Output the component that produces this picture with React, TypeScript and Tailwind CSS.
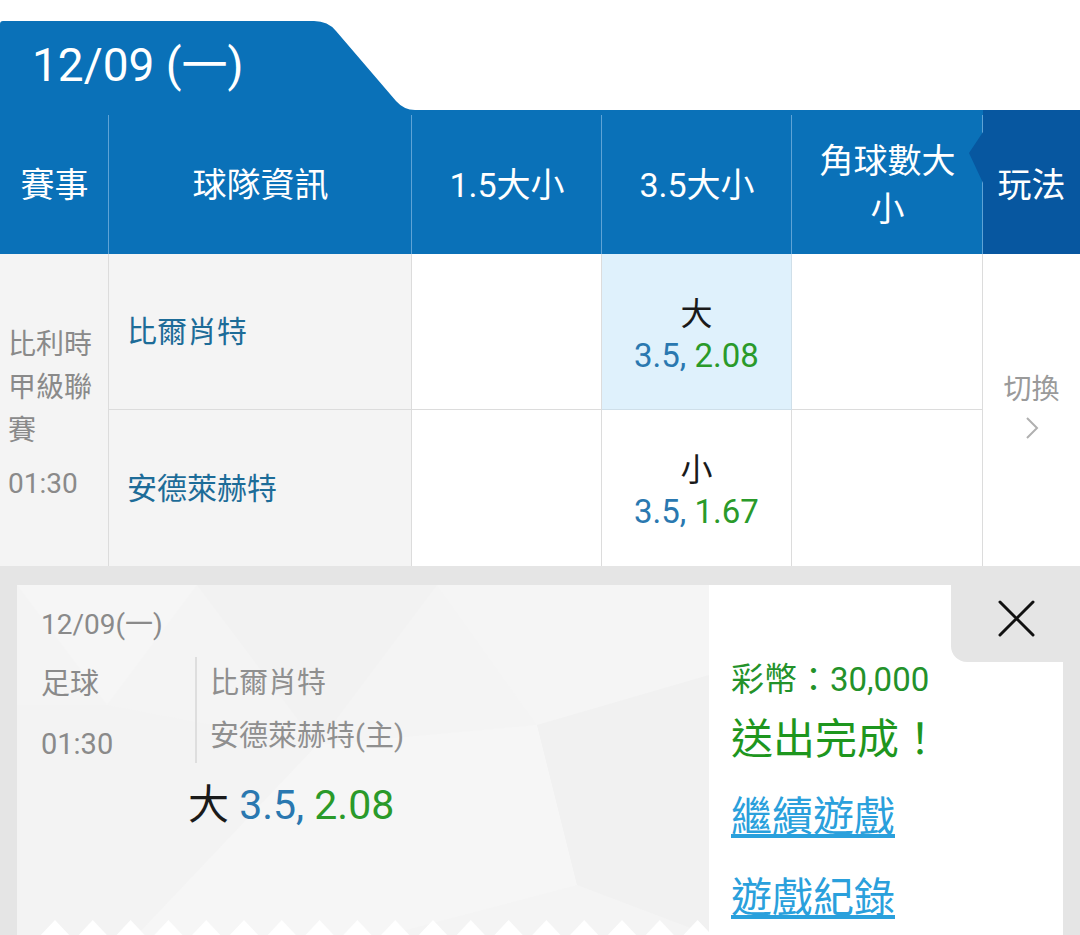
export default function App() {
  const teeth = Array.from({ length: 19 }, (_, i) => 38 + i * 37.8)

  return (
    <div className="h-[935px] w-[1080px] overflow-hidden bg-white font-['Roboto','Noto_Sans_CJK_TC',sans-serif]">
      {/* Date tab */}
      <div className="flex pt-[21px]">
        <div className="h-[89px] w-[300px] rounded-tl-[3px] bg-[#0a71b8] pl-[32px] pt-[16px] text-[46px] leading-[56px] text-white">
          12/09 (一)
        </div>
        <svg width="115" height="89" viewBox="0 0 115 89" className="block">
          <path d="M0 0H14Q28 0 36 10L96 80Q104 89 115 89H0Z" fill="#0a71b8" />
        </svg>
      </div>

      {/* Header */}
      <div className="grid h-[144px] grid-cols-[109px_303px_190px_190px_191px_97px] bg-[#0a71b8] text-[34px] text-white">
        <div className="relative flex items-center justify-center pt-[6px] after:absolute after:bottom-0 after:right-0 after:top-[5px] after:w-px after:bg-[#5ea3d6]">
          賽事
        </div>
        <div className="relative flex items-center justify-center pt-[6px] after:absolute after:bottom-0 after:right-0 after:top-[5px] after:w-px after:bg-[#5ea3d6]">
          球隊資訊
        </div>
        <div className="relative flex items-center justify-center pt-[6px] after:absolute after:bottom-0 after:right-0 after:top-[5px] after:w-px after:bg-[#5ea3d6]">
          1.5大小
        </div>
        <div className="relative flex items-center justify-center pt-[6px] after:absolute after:bottom-0 after:right-0 after:top-[5px] after:w-px after:bg-[#5ea3d6]">
          3.5大小
        </div>
        <div className="relative flex items-center justify-center px-4 pt-[6px] text-center leading-[48px] after:absolute after:bottom-0 after:right-0 after:top-[5px] after:w-px after:bg-[#5ea3d6]">
          角球數大小
        </div>
        <div className="relative flex items-center justify-center bg-[#0757a0] pt-[6px]">
          <svg width="14" height="51" viewBox="0 0 14 51" className="absolute left-[-14px] top-[22px]">
            <polygon points="14,0 0,21 14,51" fill="#0757a0" />
          </svg>
          玩法
        </div>
      </div>

      {/* Body */}
      <div className="grid grid-cols-[109px_303px_190px_190px_191px_97px] grid-rows-[156px_156px]">
        <div className="row-span-2 flex flex-col justify-center border-r border-[#dcdcdc] bg-[#f4f4f4] pl-[8px] pr-[4px] pt-[8px] text-[28px] leading-[43px] text-[#8a8a8a]">
          <div>比利時甲級聯賽</div>
          <div className="mt-[10px]">01:30</div>
        </div>
        <div className="flex items-center border-b border-r border-[#dcdcdc] bg-[#f4f4f4] pl-[18px] text-[30px] text-[#1d6c98]">
          比爾肖特
        </div>
        <div className="border-b border-r border-[#dcdcdc]" />
        <div className="flex flex-col items-center justify-center border-b border-r border-[#cfdfe9] bg-[#dff1fc] pt-[6px]">
          <div className="text-[32px] leading-[42px] text-[#1a1a1a]">大</div>
          <div className="text-[33px] leading-[42px]">
            <span className="text-[#2a78b0]">3.5, </span>
            <span className="text-[#2a9a2a]">2.08</span>
          </div>
        </div>
        <div className="border-b border-r border-[#dcdcdc]" />
        <div className="row-span-2 flex flex-col items-center justify-center pb-[10px]">
          <div className="text-[28px] leading-[40px] text-[#9a9a9a]">切換</div>
          <svg width="14" height="24" viewBox="0 0 14 24" className="mt-[6px]" fill="none" stroke="#b0b0b0" strokeWidth="2">
            <path d="M2 2l10 10-10 10" />
          </svg>
        </div>
        <div className="flex items-center border-r border-[#dcdcdc] bg-[#f4f4f4] pl-[18px] text-[30px] text-[#1d6c98]">
          安德萊赫特
        </div>
        <div className="border-r border-[#dcdcdc]" />
        <div className="flex flex-col items-center justify-center border-r border-[#dcdcdc] pt-[6px]">
          <div className="text-[32px] leading-[42px] text-[#1a1a1a]">小</div>
          <div className="text-[33px] leading-[42px]">
            <span className="text-[#2a78b0]">3.5, </span>
            <span className="text-[#2a9a2a]">1.67</span>
          </div>
        </div>
        <div className="border-r border-[#dcdcdc]" />
      </div>

      {/* Bet slip */}
      <div className="h-[369px] bg-[#e5e5e5] px-[17px] pt-[19px]">
        <div className="flex h-[350px]">
          <div className="relative w-[692px] overflow-hidden bg-[#f4f4f4]">
            <svg className="absolute inset-0" width="692" height="350" viewBox="0 0 692 350">
              <polygon points="0,0 180,0 90,120" fill="#f6f6f6" />
              <polygon points="180,0 420,0 300,160" fill="#f2f2f2" />
              <polygon points="420,0 692,0 692,90 520,140" fill="#f5f5f5" />
              <polygon points="0,120 90,120 300,160 120,350 0,350" fill="#f3f3f3" />
              <polygon points="300,160 520,140 560,300 370,350 120,350" fill="#f6f6f6" />
              <polygon points="520,140 692,90 692,350 560,300" fill="#f1f1f1" />
              {teeth.map(x => (
                <polygon key={x} points={`${x - 16},352 ${x},335 ${x + 16},352`} fill="#ffffff" />
              ))}
            </svg>
            <div className="relative pl-[24px] pt-[22px] text-[#8a8a8a]">
              <div className="text-[28px] leading-[36px]">12/09(一)</div>
              <div className="mt-[14px] flex items-start">
                <div className="flex w-[154px] flex-col text-[29px]">
                  <div className="leading-[54px]">足球</div>
                  <div className="mt-[6px] leading-[54px]">01:30</div>
                </div>
                <div className="flex h-[106px] flex-col border-l-2 border-[#dedede] pl-[13px] text-[29px] text-[#8f8f8f]">
                  <div className="leading-[53px]">比爾肖特</div>
                  <div className="leading-[53px]">安德萊赫特(主)</div>
                </div>
              </div>
              <div className="ml-[147px] mt-[10px] text-[41px] leading-[48px]">
                <span className="text-[#1a1a1a]">大 </span>
                <span className="text-[#2a78b0]">3.5, </span>
                <span className="text-[#2a9a2a]">2.08</span>
              </div>
            </div>
          </div>

          <div className="relative w-[354px] bg-white pl-[22px] pt-[75px]">
            <div className="absolute right-0 top-0 h-[77px] w-[112px] rounded-bl-[16px] bg-[#e5e5e5] pl-[47px] pt-[15px]">
              <svg width="37" height="37" viewBox="0 0 37 37" stroke="#111" strokeWidth="3" strokeLinecap="round">
                <path d="M2 2L35 35M35 2L2 35" />
              </svg>
            </div>
            <div className="text-[33px] leading-[40px] text-[#23922a]">彩幣：30,000</div>
            <div className="mt-[15px] text-[42px] leading-[50px] text-[#1e961e]">送出完成！</div>
            <div className="mt-[26px] text-[41px] leading-[52px] text-[#2aa0dc] underline">繼續遊戲</div>
            <div className="mt-[29px] text-[41px] leading-[52px] text-[#2aa0dc] underline">遊戲紀錄</div>
          </div>
        </div>
      </div>
    </div>
  )
}
